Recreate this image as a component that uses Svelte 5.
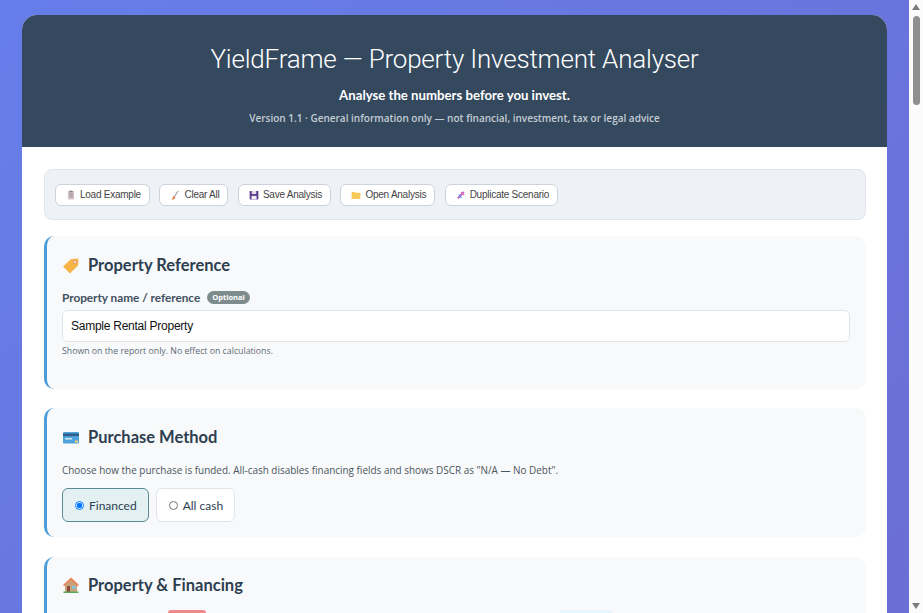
<script>
  const tools = [
    { id: 'clip', label: 'Load Example' },
    { id: 'broom', label: 'Clear All' },
    { id: 'save', label: 'Save Analysis' },
    { id: 'folder', label: 'Open Analysis' },
    { id: 'dna', label: 'Duplicate Scenario' }
  ];
</script>

{#snippet toolIcon(id)}
  <svg class="ticon" viewBox="0 0 16 16" aria-hidden="true">
    {#if id === 'clip'}
      <rect x="3" y="1.500" width="10" height="13.500" rx="1" fill="#d5c3c9" />
      <rect x="5.500" y="1" width="5" height="2.500" fill="#8f7f88" />
      <path d="M5 6h6M5 8.500h6M5 11h6" stroke="#8d7d88" stroke-width="1" />
    {:else if id === 'broom'}
      <path d="M13 1.500 7.500 10" stroke="#6f6a6a" stroke-width="1.300" />
      <path d="M6 9 9 11 6.500 15 2.500 15Z" fill="#e0875c" />
    {:else if id === 'save'}
      <rect x="1" y="1.500" width="14" height="13.500" rx="1" fill="#5f3d8f" />
      <rect x="4.500" y="1.500" width="7" height="5" fill="#e3dcea" />
      <rect x="4" y="9.500" width="8" height="5.500" fill="#f1edf5" />
    {:else if id === 'folder'}
      <path d="M1 4a1 1 0 0 1 1-1h4l1.500 1.500H14a1 1 0 0 1 1 1V13.500a1 1 0 0 1-1 1H2a1 1 0 0 1-1-1Z" fill="#f6c95b" />
    {:else}
      <path d="M3 13.500 12.500 3" stroke="#b65fc9" stroke-width="3" />
      <path d="M4.500 7.500 9 12.500" stroke="#5f8fd6" stroke-width="2" />
      <path d="M8 3.500 13 8" stroke="#e06aa5" stroke-width="2" />
    {/if}
  </svg>
{/snippet}

<div class="card">
  <header class="hero">
    <h1>YieldFrame — Property Investment Analyser</h1>
    <p class="tag">Analyse the numbers before you invest.</p>
    <p class="ver">Version 1.1 · General information only — not financial, investment, tax or legal advice</p>
  </header>

  <main class="content">
    <div class="toolbar">
      {#each tools as t}
        <button class="tool">{@render toolIcon(t.id)}{t.label}</button>
      {/each}
    </div>

    <section class="panel">
      <h2>
        <svg class="sicon" viewBox="0 0 18 18" aria-hidden="true">
          <path d="M1 10.500 9 3l7.500-.5-.5 7-8 8Z" fill="#f6b548" />
          <circle cx="13" cy="6" r="1.600" fill="#fbe3b0" stroke="#e58a7a" stroke-width=".8" />
        </svg>
        Property Reference
      </h2>
      <div class="label"><span>Property name / reference</span><span class="badge">Optional</span></div>
      <input class="text" value="Sample Rental Property" />
      <p class="hint">Shown on the report only. No effect on calculations.</p>
    </section>

    <section class="panel method">
      <h2>
        <svg class="sicon" viewBox="0 0 18 18" aria-hidden="true">
          <rect x="1" y="4" width="16" height="11.500" rx="1.200" fill="#4fa3dc" />
          <rect x="1" y="5.500" width="16" height="2.600" fill="#2f5f8a" />
          <rect x="3" y="10" width="7" height="1.500" fill="#d7ecf8" />
          <rect x="13" y="12.500" width="3" height="2" fill="#f1d36b" />
        </svg>
        Purchase Method
      </h2>
      <p class="desc">Choose how the purchase is funded. All-cash disables financing fields and shows DSCR as "N/A — No Debt".</p>
      <div class="radios">
        <label class="radio on"><input type="radio" name="m" checked />Financed</label>
        <label class="radio"><input type="radio" name="m" />All cash</label>
      </div>
    </section>

    <section class="panel last">
      <h2>
        <svg class="sicon" viewBox="0 0 18 18" aria-hidden="true">
          <path d="M9 1.500 1 9l1.200 1.200L3 9.500V16h12V9.500l.8.7L17 9Z" fill="#e8845a" />
          <path d="M3 9.500 9 4l6 5.500V16H3Z" fill="#c9a27c" />
          <rect x="5" y="10" width="3" height="6" fill="#8b4a3c" />
          <rect x="10" y="10" width="3.500" height="3" fill="#7fc4dc" />
          <rect x="1.500" y="15.500" width="15" height="1.500" fill="#5aa85a" />
        </svg>
        Property &amp; Financing
      </h2>
      <p class="desc note">Fields marked with the <span class="req">Required</span> badge must be completed before results can be calculated. Figures shown in <span class="calc">calculated</span> fields are worked out from your inputs and cannot be edited.</p>
    </section>
  </main>
</div>

<div class="scrollbar" aria-hidden="true">
  <span class="arrow up"></span>
  <span class="thumb"></span>
  <span class="arrow down"></span>
</div>

<style>
  :global(body) {
    margin: 0;
    padding: 15px 36px 15px 22px;
    background: linear-gradient(135deg, #667eea 0%, #764ba2 100%);
    font-family: "Open Sans", "Noto Sans", sans-serif;
    color: #2c3e50;
  }
  .card {
    background: #fff;
    border-radius: 15px;
    overflow: hidden;
    min-height: 3970px;
  }
  .hero {
    background: #34495e;
    color: #fff;
    text-align: center;
    padding: 26px 20px 22px;
    height: 84px;
  }
  h1 {
    margin: 0;
    font-family: Roboto, sans-serif;
    font-weight: 300;
    font-size: 26px;
    letter-spacing: -0.2px;
    line-height: 36px;
  }
  .tag {
    margin: 9px 0 0;
    font-family: Lato, sans-serif;
    font-size: 13.200px;
    font-weight: 700;
    line-height: 18px;
  }
  .ver {
    margin: 7px 0 0;
    font-size: 10px;
    font-weight: 600;
    line-height: 14px;
    color: #c4ccd4;
  }
  .content {
    padding: 22px 21px 0 22px;
  }
  .toolbar {
    display: flex;
    gap: 9.500px;
    align-items: center;
    background: #eef2f6;
    border: 1px solid #e0e6ec;
    border-radius: 8px;
    height: 51px;
    padding: 0 10px;
    box-sizing: border-box;
  }
  .tool {
    display: inline-flex;
    align-items: center;
    gap: 4px;
    height: 22px;
    padding: 0 8px 0 10px;
    background: #fff;
    border: 1px solid #ccd3da;
    border-radius: 6px;
    font-family: "Liberation Sans", sans-serif;
    font-size: 10px;
    letter-spacing: -0.25px;
    color: #444;
  }
  .ticon {
    width: 10px;
    height: 10px;
  }
  .panel {
    margin-top: 16px;
    background: #f8f9fa;
    border-left: 3px solid #4d9dd9;
    border-radius: 10px;
    padding: 17px 16px 32px 15px;
    height: 153px;
    box-sizing: border-box;
  }
  .method {
    margin-top: 19px;
    height: 129px;
  }
  .last {
    margin-top: 20px;
    padding-top: 16px;
    height: 300px;
  }
  h2 {
    display: flex;
    align-items: center;
    gap: 8px;
    margin: 0;
    font-family: Lato, sans-serif;
    font-size: 16.500px;
    font-weight: 700;
    line-height: 24px;
  }
  .sicon {
    width: 18px;
    height: 18px;
  }
  .label {
    display: flex;
    align-items: center;
    gap: 7px;
    margin-top: 13px;
    font-family: Lato, sans-serif;
    font-size: 11.750px;
    font-weight: 700;
    color: #40505f;
  }
  .badge {
    background: #7f8c8d;
    color: #fff;
    border-radius: 8px;
    padding: 0 5px;
    font-family: "Open Sans", sans-serif;
    font-size: 7.500px;
    font-weight: 700;
    line-height: 13px;
  }
  .text {
    display: block;
    width: 100%;
    box-sizing: border-box;
    height: 32px;
    margin-top: 5px;
    padding: 0 8px;
    background: #fff;
    border: 1px solid #e1e5ea;
    border-radius: 5px;
    font-family: "Liberation Sans", sans-serif;
    font-size: 12px;
    letter-spacing: -0.25px;
    color: #111;
  }
  .hint {
    margin: 3px 0 0;
    font-size: 8.750px;
    color: #5f6b75;
  }
  .desc {
    margin: 14px 0 0;
    font-size: 9.950px;
    color: #4a5660;
  }
  .note {
    white-space: nowrap;
    margin-top: 13px;
    word-spacing: -0.4px;
  }
  .req {
    background: #f08a8a;
    color: #fff;
    padding: 2px 2px 0;
    border-radius: 3px;
    font-size: 8px;
  }
  .calc {
    background: #e6f7fd;
    padding: 0 3px;
  }
  .radios {
    display: flex;
    gap: 7px;
    margin-top: 11px;
  }
  .radio {
    display: flex;
    align-items: center;
    gap: 5px;
    height: 34px;
    padding: 0 11px 0 12px;
    box-sizing: border-box;
    background: #fff;
    border: 1px solid #e1e5ea;
    border-radius: 6px;
    font-family: Lato, sans-serif;
    font-size: 12px;
  }
  .radio input {
    margin: 0;
    width: 9px;
    height: 9px;
  }
  .on {
    background: #e3f1f3;
    border-color: #5c8a92;
  }
  .scrollbar {
    position: fixed;
    top: 0;
    right: 0;
    bottom: 0;
    width: 14px;
    background: #fbfbfb;
    display: flex;
    flex-direction: column;
    align-items: center;
  }
  .thumb {
    width: 7px;
    height: 89px;
    margin-top: 6px;
    background: #8f8f8f;
    border-radius: 4px;
  }
  .arrow {
    width: 0;
    height: 0;
    border-left: 4px solid transparent;
    border-right: 4px solid transparent;
  }
  .up {
    margin-top: 4px;
    border-bottom: 6px solid #7d7d7d;
  }
  .down {
    margin-top: auto;
    margin-bottom: 4px;
    border-top: 6px solid #7d7d7d;
  }
</style>
